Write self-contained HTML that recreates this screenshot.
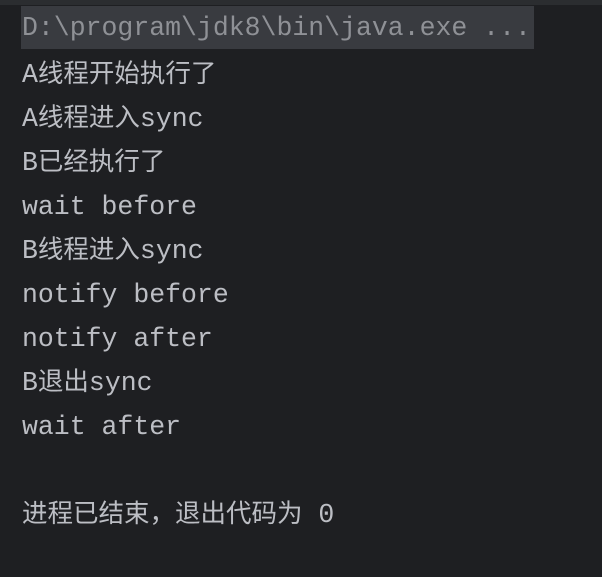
<!DOCTYPE html>
<html><head><meta charset="utf-8"><style>
html,body{margin:0;padding:0;background:#1e1f22;width:602px;height:577px;overflow:hidden}
.top{position:absolute;left:0;top:0;width:602px;height:5px;background:#2b2d30}
.l{position:absolute;left:22px;height:44px;line-height:44px;font-family:"Liberation Mono","Noto Sans CJK SC",monospace;font-size:26.5px;color:#bcbec4;white-space:pre}
.l span{font-size:25.5px}
.h{left:21px;width:512px;background:#393b40;color:#8f9196;padding-left:1px;height:43px;line-height:45px}
</style></head><body>
<div class="top"></div>
<div class="l h" style="top:6px">D:\program\jdk8\bin\java.exe ...</div>
<div class="l" style="top:53px">A<span>线程开始执行了</span></div>
<div class="l" style="top:97px">A<span>线程进入</span>sync</div>
<div class="l" style="top:141px">B<span>已经执行了</span></div>
<div class="l" style="top:185px">wait before</div>
<div class="l" style="top:229px">B<span>线程进入</span>sync</div>
<div class="l" style="top:273px">notify before</div>
<div class="l" style="top:317px">notify after</div>
<div class="l" style="top:361px">B<span>退出</span>sync</div>
<div class="l" style="top:405px">wait after</div>
<div class="l" style="top:493px"><span>进程已结束，退出代码为</span> 0</div>
</body></html>
